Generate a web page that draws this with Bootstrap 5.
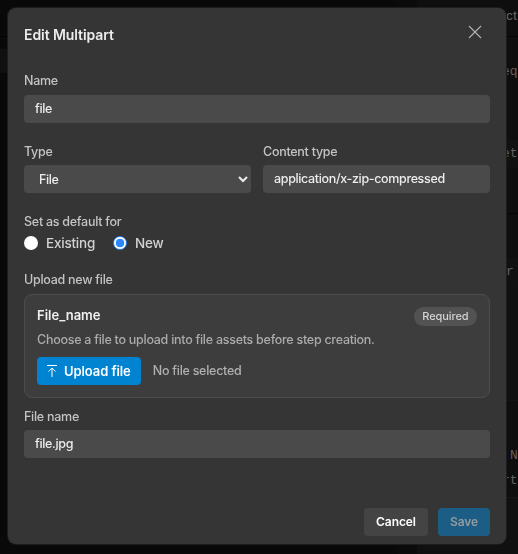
<!DOCTYPE html>
<html lang="en" data-bs-theme="dark">
<head>
<meta charset="utf-8">
<meta name="viewport" content="width=device-width, initial-scale=1">
<title>Edit Multipart</title>
<link href="https://cdn.jsdelivr.net/npm/bootstrap@5.3.0/dist/css/bootstrap.min.css" rel="stylesheet">
<style>
  body { background: #090909; font: 500 12.5px/20px Inter, sans-serif; letter-spacing: -.27px; color: #c4c4c4; overflow: hidden; }
  .workspace { height: 554px; font: 13px/20px "Liberation Mono", monospace; letter-spacing: 0; color: #606060; }
  .side-left { width: 397px; }
  .side-mid { width: 20px; background: #0b0b0b; }
  .side-strip { height: 24px; margin-top: 12px; background: #101010; }
  .side-head { height: 37px; border-bottom: 1px solid #030303; }
  .inspector { width: 101px; background: #0e0e0e; }
  .inspector > div { flex: none; padding-left: 85px; white-space: nowrap; overflow: hidden; }
  .insp-tab { height: 37px; border-bottom: 1px solid #050505; padding-top: 6px; }
  .inspector > .insp-tab { padding-left: 82px; font: 500 12px/20px Inter, sans-serif; }
  .insp-line { height: 103px; padding-top: 25px; }
  .insp-field { background: #111; height: 28px; padding-top: 4px; }
  .insp-rule { height: 46px; border-bottom: 1px solid #050505; }
  .insp-gap { height: 44px; }
  .inspector > .insp-short { padding-left: 89px; }
  .insp-low { height: 115px; background: #101010; border-bottom: 1px solid #131313; }
  .insp-code { height: 96px; padding-top: 42px; line-height: 25px; }
  .insp-code span { margin-left: 8px; }
  .insp-foot { height: 57px; background: #101010; border-top: 1px solid #171717; padding-top: 33px; }
  .insp-foot span { margin-left: -73px; }
  .edit-modal { position: fixed; inset: 8px 12px 10px 8px; background: #353535; border-radius: 8px; box-shadow: 0 0 0 1px #1d1d1d; padding: 0 16px 8px; }
  .modal-top { height: 63px; padding-top: 17px; }
  .modal-top h1 { font-size: 14px; line-height: 20px; font-weight: 600; letter-spacing: -.08px; color: #ececec; }
  .close-x { padding: 0; border: 0; background: none; color: #b5b5b5; width: 14px; height: 14px; margin-right: 8px; line-height: 0; }
  .field-label { display: block; height: 24px; line-height: 20px; color: #c4c4c4; }
  .field-box { height: 28px; padding: 0 11px; border: 0; border-radius: 4px; background-color: #4a4a4a; color: #ececec; font-size: 12.5px; font-weight: 500; letter-spacing: -.35px; line-height: 28px; }
  select.field-box { appearance: auto; background-image: none; }
  .pair { margin-top: 19px; gap: 12px; }
  .pair > div { flex: 1 1 0; min-width: 0; }
  .pair .field-label { height: 23px; }
  .default-group { margin-top: 19px; }
  .default-group .field-label { height: 20px; }
  .radio-line { height: 22px; gap: 18px; font-size: 13.5px; letter-spacing: -.22px; line-height: 22px; }
  .radio-line label { color: #d2d2d2; }
  .dot { appearance: none; width: 14px; height: 14px; margin: 0 8px 0 0; border-radius: 50%; background: #fff; border: 0; }
  .dot:checked { background: radial-gradient(circle, #2d87ff 4px, #fff 4.6px); border: 1.5px solid #2d87ff; }
  .upload-label { margin-top: 16px; }
  .upload-box { height: 104px; border: 1px solid #4d4d4d; border-radius: 8px; background: #3d3d3d; padding: 12px; }
  .upload-box h2 { font-size: 13px; line-height: 17px; font-weight: 600; letter-spacing: 0; color: #f0f0f0; }
  .upload-box p { line-height: 18px; color: #ababab; margin: 5px 0 8px; }
  .need { background: #525252; color: #d4d4d4; font-size: 11px; letter-spacing: -.1px; line-height: 19px; height: 19px; padding: 0 8.5px; }
  .act { height: 28px; border: 0; border-radius: 4px; font-size: 12px; line-height: 28px; font-weight: 600; letter-spacing: -.08px; padding: 0 12px; }
  .act-upload { background: #0083d0; color: #fff; font-size: 13px; padding: 0 10px; }
  .act-upload svg { margin-right: 7px; }
  .act-cancel { background: #444; color: #fff; }
  .act-save { background: #1b5d84; color: #949ba0; }
  .no-file { margin-left: 12px; color: #b0b0b0; }
  .file-label { margin-top: 9px; height: 23px; }
  .modal-actions { gap: 10px; }
</style>
<script src="https://cdn.jsdelivr.net/npm/bootstrap@5.3.0/dist/js/bootstrap.bundle.min.js"></script>
</head>
<body>
<div class="workspace d-flex" aria-hidden="true">
  <div class="side-left"><div class="side-head"></div><div class="side-strip"></div></div>
  <div class="side-mid"></div>
  <div class="inspector d-flex flex-column">
    <div class="insp-tab">ect</div>
    <div class="insp-line">eq</div>
    <div class="insp-field">et</div>
    <div class="insp-rule"></div>
    <div class="insp-gap"></div>
    <div class="insp-field insp-short">r</div>
    <div class="insp-low"></div>
    <div class="insp-code"><span>N</span><br>rt</div>
    <div class="insp-foot"><span>Test</span></div>
  </div>
</div>

<main class="edit-modal d-flex flex-column" role="dialog" aria-labelledby="title">
  <header class="modal-top d-flex justify-content-between">
    <h1 class="mb-0" id="title">Edit Multipart</h1>
    <button class="close-x" type="button" aria-label="Close">
      <svg width="14" height="14" viewBox="0 0 14 14" fill="none" stroke="currentColor" stroke-width="1.1"><path d="M1 1 13 13M13 1 1 13"/></svg>
    </button>
  </header>

  <label class="field-label" for="name">Name</label>
  <input class="form-control field-box" id="name" value="file">

  <div class="pair d-flex">
    <div>
      <label class="field-label" for="type">Type</label>
      <select class="form-select field-box" id="type"><option>File</option></select>
    </div>
    <div>
      <label class="field-label" for="ctype">Content type</label>
      <input class="form-control field-box" id="ctype" value="application/x-zip-compressed">
    </div>
  </div>

  <div class="default-group">
    <span class="field-label">Set as default for</span>
    <div class="radio-line d-flex">
      <label class="d-flex align-items-center"><input class="dot" type="radio" name="def">Existing</label>
      <label class="d-flex align-items-center"><input class="dot" type="radio" name="def" checked>New</label>
    </div>
  </div>

  <span class="field-label upload-label">Upload new file</span>
  <section class="upload-box">
    <div class="d-flex justify-content-between align-items-start">
      <h2 class="mb-0">File_name</h2>
      <span class="need rounded-pill">Required</span>
    </div>
    <p>Choose a file to upload into file assets before step creation.</p>
    <div class="d-flex align-items-center">
      <button class="btn act act-upload d-flex align-items-center" type="button">
        <svg width="10" height="14" viewBox="0 0 10 14" fill="none" stroke="currentColor"><path d="M0 1.5H10M5 4V13M1.5 7.5 5 4 8.5 7.5"/></svg>Upload file
      </button>
      <span class="no-file">No file selected</span>
    </div>
  </section>

  <label class="field-label file-label" for="fname">File name</label>
  <input class="form-control field-box" id="fname" value="file.jpg">

  <footer class="modal-actions d-flex justify-content-end mt-auto">
    <button class="btn act act-cancel" type="button">Cancel</button>
    <button class="btn act act-save" type="button">Save</button>
  </footer>
</main>
</body>
</html>
